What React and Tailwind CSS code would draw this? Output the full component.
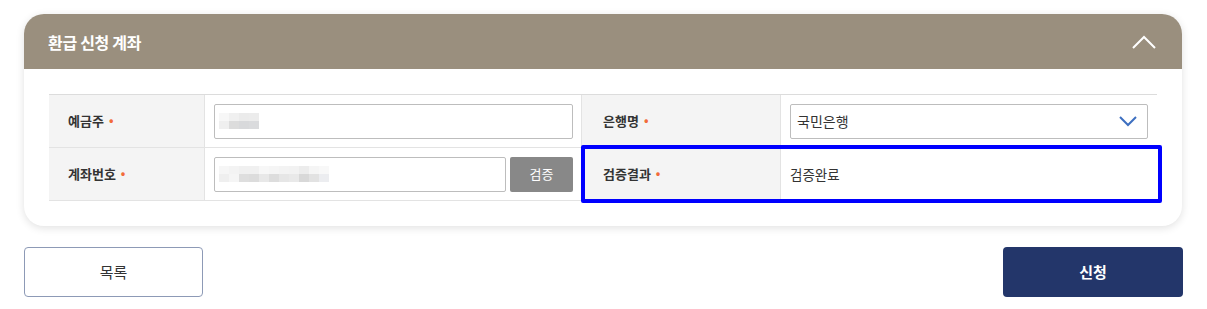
import { useState } from "react";

function Dot() {
  return <span className="ml-[5px] text-[#f26b3a] text-[12px] relative top-[-1px]">•</span>;
}

function Blur({ widths }) {
  // pixelated masked value
  return (
    <div className="flex flex-col">
      <div className="flex">
        {widths.map((c, i) => (
          <div key={i} className="w-[10px] h-[8px]" style={{ background: c[0] }} />
        ))}
      </div>
      <div className="flex">
        {widths.map((c, i) => (
          <div key={i} className="w-[10px] h-[8px]" style={{ background: c[1] }} />
        ))}
      </div>
    </div>
  );
}

function App() {
  const [open, setOpen] = useState(true);

  const nameBlur = [
    ["#f7f7f7", "#efefef"],
    ["#f0f0f0", "#dcdcdc"],
    ["#ebebeb", "#d8d9db"],
    ["#ececec", "#dadbdd"],
  ];
  const acctBlur = [
    ["#f6f6f6", "#efefef"],
    ["#f3f3f3", "#f5f5f5"],
    ["#f0f0f0", "#dedede"],
    ["#f0f0f0", "#dcdcdc"],
    ["#f7f7f7", "#e8e8e8"],
    ["#f5f5f5", "#dddddd"],
    ["#f3f3f3", "#e6e6e6"],
    ["#f2f2f2", "#e9e9e9"],
    ["#ececec", "#d8d8d8"],
    ["#f5f5f5", "#e2e2e2"],
    ["#f8f8f8", "#ecedf0"],
  ];

  return (
    <div className="w-[1207px] h-[309px] bg-white font-['Noto_Sans_CJK_KR','Noto_Sans',sans-serif] text-[#333]">

      {/* CARD */}
      <div className="ml-[24px] pt-[14px] w-[1158px]">
        <div className="rounded-[20px] bg-white shadow-[0_2px_8px_rgba(0,0,0,0.12)] overflow-hidden">

          <div className="h-[55px] bg-[#9a8f7e] flex items-center justify-between pl-[24px] pr-[26px]">
            <h2 className="text-white text-[16px] font-bold tracking-[-0.3px]">환급 신청 계좌</h2>
            <button onClick={() => setOpen(!open)} className="w-[24px] h-[24px] flex items-center justify-center">
              <svg width="24" height="14" viewBox="0 0 24 14" fill="none">
                <path d="M1 13 L12 2 L23 13" stroke="white" strokeWidth="2" />
              </svg>
            </button>
          </div>

          {/* TABLE */}
          <div className="p-[25px]">
            <div className="grid grid-cols-[156px_376px_200px_376px] border-t border-[#dcdcdc] text-[13px]">

              {/* ROW 1 */}
              <div className="h-[53px] bg-[#f4f4f4] border-b border-r border-[#e3e3e3] flex items-center pl-[19px] font-bold">
                예금주<Dot />
              </div>
              <div className="h-[53px] border-b border-[#e3e3e3] flex items-center pl-[9px]">
                <div className="w-[359px] h-[35px] border border-[#bdbdbd] rounded-[2px] flex items-center pl-[4px]">
                  <Blur widths={nameBlur} />
                </div>
              </div>
              <div className="h-[53px] bg-[#f4f4f4] border-b border-l border-r border-[#e3e3e3] flex items-center pl-[21px] font-bold">
                은행명<Dot />
              </div>
              <div className="h-[53px] border-b border-[#e3e3e3] flex items-center pl-[9px]">
                <div className="w-[358px] h-[35px] border border-[#bdbdbd] rounded-[2px] flex items-center justify-between pl-[6px] pr-[10px] text-[14px]">
                  <span>국민은행</span>
                  <svg width="18" height="11" viewBox="0 0 18 11" fill="none">
                    <path d="M1 1 L9 9 L17 1" stroke="#3d6fc0" strokeWidth="2" />
                  </svg>
                </div>
              </div>

              {/* ROW 2 */}
              <div className="h-[53px] bg-[#f4f4f4] border-b border-r border-[#e3e3e3] flex items-center pl-[19px] font-bold">
                계좌번호<Dot />
              </div>
              <div className="h-[53px] border-b border-[#e3e3e3] flex items-center pl-[9px] gap-[4px]">
                <div className="w-[292px] h-[35px] border border-[#bdbdbd] rounded-[2px] flex items-center pl-[4px]">
                  <Blur widths={acctBlur} />
                </div>
                <button className="w-[63px] h-[35px] bg-[#888888] rounded-[2px] text-white text-[13px]">검증</button>
              </div>
              <div className="relative h-[53px] bg-[#f4f4f4] border-b border-l border-r border-[#e3e3e3] flex items-center pl-[21px] font-bold">
                검증결과<Dot />
                <div className="absolute left-[-1px] top-[-3px] w-[581px] h-[58px] border-[4px] border-[#0000ff] rounded-[2px] pointer-events-none" />
              </div>
              <div className="h-[53px] border-b border-[#e3e3e3] flex items-center pl-[9px] text-[13.5px]">
                검증완료
              </div>

            </div>
          </div>

        </div>
      </div>

      {/* BUTTONS */}
      <div className="flex justify-between pl-[24px] pr-[24px] mt-[21px]">
        <button className="w-[179px] h-[50px] border border-[#8d9ab6] rounded-[4px] text-[15px] text-[#333]">목록</button>
        <button className="w-[180px] h-[50px] bg-[#23366a] rounded-[4px] text-[15px] font-bold text-white">신청</button>
      </div>

    </div>
  );
}

export default App;
